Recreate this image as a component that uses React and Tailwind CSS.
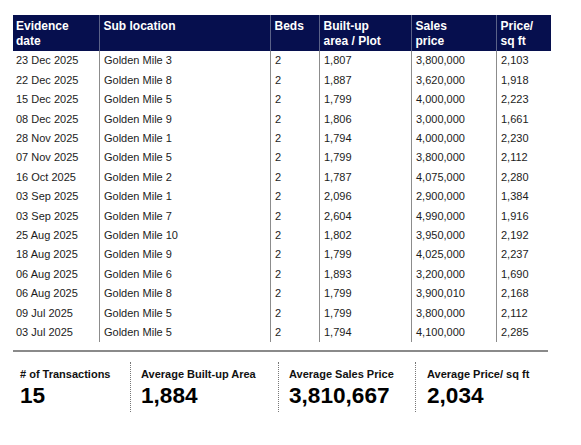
import React from "react";

const rows = [
  ["23 Dec 2025", "Golden Mile 3", "2", "1,807", "3,800,000", "2,103"],
  ["22 Dec 2025", "Golden Mile 8", "2", "1,887", "3,620,000", "1,918"],
  ["15 Dec 2025", "Golden Mile 5", "2", "1,799", "4,000,000", "2,223"],
  ["08 Dec 2025", "Golden Mile 9", "2", "1,806", "3,000,000", "1,661"],
  ["28 Nov 2025", "Golden Mile 1", "2", "1,794", "4,000,000", "2,230"],
  ["07 Nov 2025", "Golden Mile 5", "2", "1,799", "3,800,000", "2,112"],
  ["16 Oct 2025", "Golden Mile 2", "2", "1,787", "4,075,000", "2,280"],
  ["03 Sep 2025", "Golden Mile 1", "2", "2,096", "2,900,000", "1,384"],
  ["03 Sep 2025", "Golden Mile 7", "2", "2,604", "4,990,000", "1,916"],
  ["25 Aug 2025", "Golden Mile 10", "2", "1,802", "3,950,000", "2,192"],
  ["18 Aug 2025", "Golden Mile 9", "2", "1,799", "4,025,000", "2,237"],
  ["06 Aug 2025", "Golden Mile 6", "2", "1,893", "3,200,000", "1,690"],
  ["06 Aug 2025", "Golden Mile 8", "2", "1,799", "3,900,010", "2,168"],
  ["09 Jul 2025", "Golden Mile 5", "2", "1,799", "3,800,000", "2,112"],
  ["03 Jul 2025", "Golden Mile 5", "2", "1,794", "4,100,000", "2,285"],
];

const headers = [
  ["Evidence", "date"],
  ["Sub location"],
  ["Beds"],
  ["Built-up", "area / Plot"],
  ["Sales", "price"],
  ["Price/", "sq ft"],
];

const cols = "grid grid-cols-[86px_171px_49px_92px_85px_55px]";

const stats = [
  ["# of Transactions", "15", "w-[117px] pl-[7px]"],
  ["Average Built-up Area", "1,884", "w-[148px] pl-[10px] border-l border-dotted border-[#777]"],
  ["Average Sales Price", "3,810,667", "w-[137px] pl-[10px] border-l border-dotted border-[#777]"],
  ["Average Price/ sq ft", "2,034", "w-[133px] pl-[11px] border-l border-dotted border-[#777]"],
];

export default function App() {
  return (
    <div
      className="w-[581px] h-[445px] bg-white pl-[13px] pt-[15px]"
      style={{ fontFamily: '"Liberation Sans", Arial, sans-serif' }}
    >
      <div className="w-[538px]">
        <div className={`${cols} bg-[#060f4e] h-[36px] text-white font-bold text-[12px] leading-[14.7px]`}>
          {headers.map((h, i) => (
            <div
              key={i}
              className={`pt-[4px] ${i === 0 ? "pl-[3px]" : "pl-[3.5px] border-l border-[#5a6288]"}`}
            >
              {h.map((l, j) => (
                <div key={j}>{l}</div>
              ))}
            </div>
          ))}
        </div>
        <div className={`${cols}`}>
          {rows.map((r, ri) =>
            r.map((c, ci) => (
              <div
                key={ri + "-" + ci}
                className={`h-[19.4px] flex items-center text-[11px] text-[#1c1c1c] ${
                  ci === 0 ? "pl-[3px]" : "pl-[4px] border-l border-[#8c8c8c]"
                }`}
              >
                {c}
              </div>
            ))
          )}
        </div>
      </div>
      <div className="w-[535px] mt-[8px] h-[2px] bg-[#8a8a8a]" />
      <div className="flex mt-[10px] w-[535px]">
        {stats.map(([l, v, cls], i) => (
          <div key={i} className={`${cls} h-[50px] pt-[6px]`}>
            <div className="text-[11px] font-bold leading-[13px] text-[#111]">{l}</div>
            <div className="text-[22.6px] font-bold leading-[26px] text-black mt-[2px]">{v}</div>
          </div>
        ))}
      </div>
    </div>
  );
}
